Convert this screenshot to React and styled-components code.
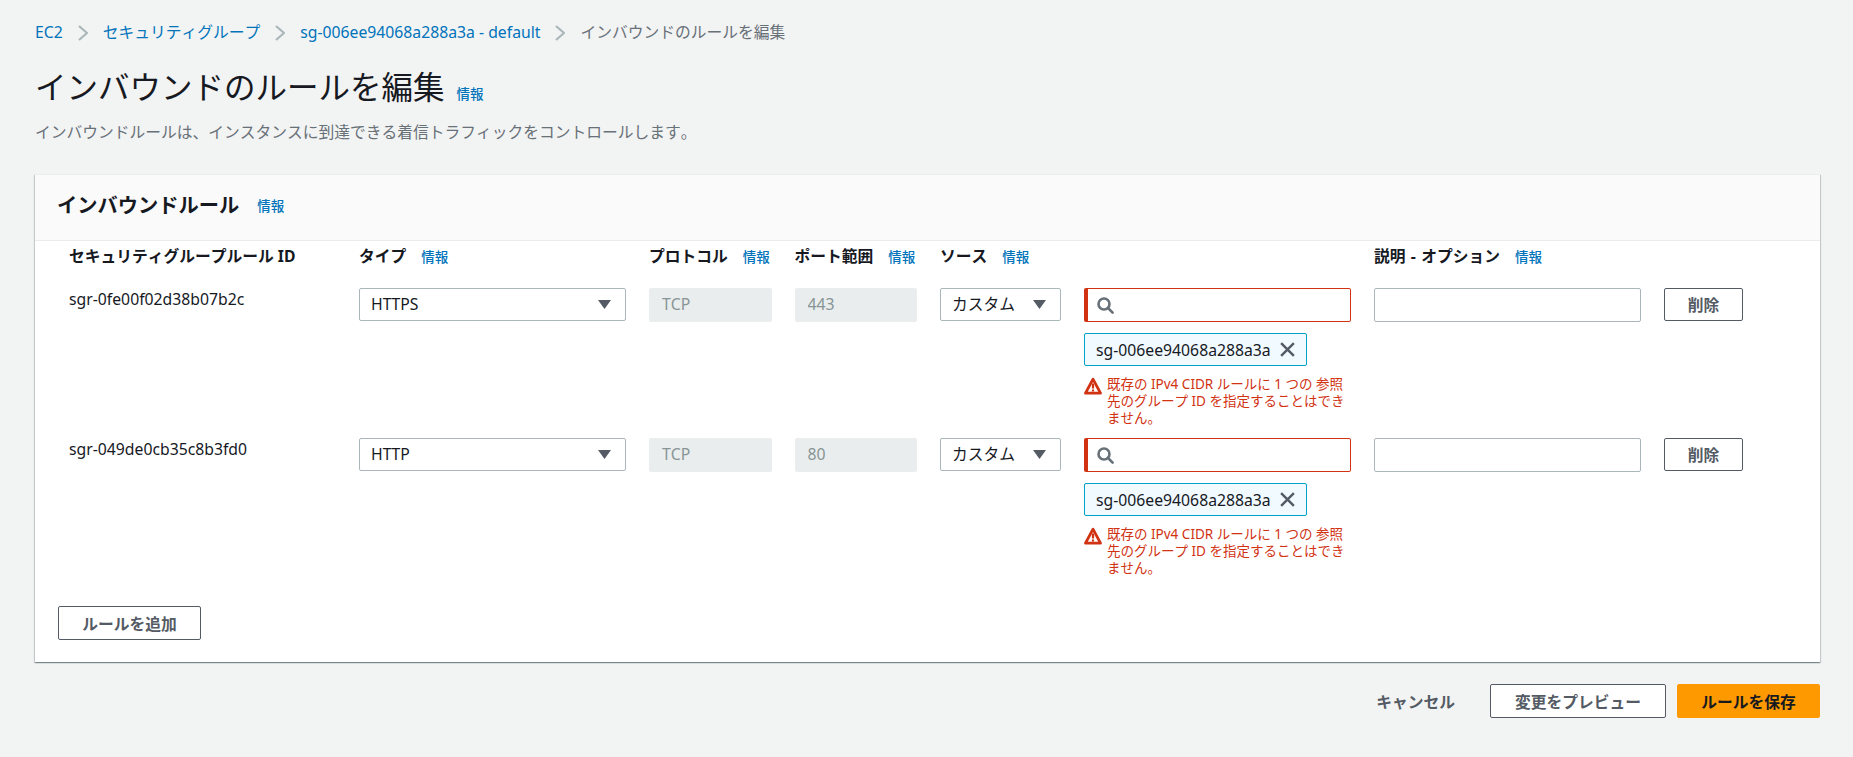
import React from 'react'
import styled, {createGlobalStyle} from 'styled-components'

const FONT = `"Noto Sans", "Noto Sans CJK JP", sans-serif`

const GlobalStyle = createGlobalStyle`
    html, body {
        margin: 0;
        padding: 0;
        background: #f2f3f3;
    }
    body {
        font-family: ${FONT};
        font-size: 15.75px;
        font-kerning: none;
        text-spacing-trim: space-all;
        color: #16191f;
    }
`

const RULES = [
    {id: 'sgr-0fe00f02d38b07b2c', type: 'HTTPS', port: '443'},
    {id: 'sgr-049de0cb35c8b3fd0', type: 'HTTP', port: '80'},
]

const Chevron = () => (
    <ChevronIcon viewBox='0 0 10 16' fill='none' stroke='#aab7b8' strokeWidth='2.2'>
        <path d='M1 1l8 7-8 7'/>
    </ChevronIcon>
)

const SearchIcon = () => (
    <svg width='17' height='17' viewBox='0 0 17 17' fill='none' stroke='#687078' strokeWidth='2.6'>
        <circle cx='7' cy='7' r='5.5'/>
        <path d='M11 11l4.6 4.6' strokeLinecap='round'/>
    </svg>
)

const CloseIcon = () => (
    <CloseButton viewBox='0 0 16 16' fill='none' stroke='#545b64' strokeWidth='2.6'>
        <path d='M1.2 1.2l13.6 13.6M14.8 1.2L1.2 14.8'/>
    </CloseButton>
)

const WarningIcon = () => (
    <WarningSvg viewBox='0 0 18 18'>
        <path d='M9 2.2L1.5 16.2h15z' fill='none' stroke='#d13212' strokeWidth='2.8' strokeLinejoin='round'/>
        <path d='M9 6.5v5M9 12.6v2' stroke='#d13212' strokeWidth='2.2'/>
    </WarningSvg>
)

const Select = ({value}) => (
    <SelectBox>
        <span>{value}</span>
        <svg width='13' height='9' viewBox='0 0 13 9'>
            <path d='M0 0h13L6.5 9z' fill='#545b64'/>
        </svg>
    </SelectBox>
)

const Heading = ({children, span, spaced}) => (
    <HeadingCell $span={span} $spaced={spaced}>
        {children}
        <Info>情報</Info>
    </HeadingCell>
)

const Rule = ({rule}) => (
    <>
        <RuleId>{rule.id}</RuleId>
        <Select value={rule.type}/>
        <DisabledInput disabled value='TCP' readOnly/>
        <DisabledInput disabled value={rule.port} readOnly/>
        <Select value='カスタム'/>
        <SourceColumn>
            <SearchBox>
                <SearchIcon/>
                <SearchInput/>
            </SearchBox>
            <Token>
                <span>sg-006ee94068a288a3a</span>
                <CloseIcon/>
            </Token>
            <ErrorMessage>
                <WarningIcon/>
                <ErrorText>既存の IPv4 CIDR ルールに 1 つの 参照先のグループ ID を指定することはできません。</ErrorText>
            </ErrorMessage>
        </SourceColumn>
        <TextInput/>
        <OutlineButton $small>削除</OutlineButton>
    </>
)

const App = () => {
    return (
        <Page>
            <GlobalStyle/>
            <Breadcrumbs>
                <Crumb>EC2</Crumb>
                <Chevron/>
                <Crumb>セキュリティグループ</Crumb>
                <Chevron/>
                <Crumb>sg-006ee94068a288a3a - default</Crumb>
                <Chevron/>
                <CurrentCrumb>インバウンドのルールを編集</CurrentCrumb>
            </Breadcrumbs>
            <TitleRow>
                <Title>インバウンドのルールを編集</Title>
                <Info>情報</Info>
            </TitleRow>
            <Description>インバウンドルールは、インスタンスに到達できる着信トラフィックをコントロールします。</Description>

            <Card>
                <CardHeader>
                    <CardTitle>インバウンドルール</CardTitle>
                    <Info>情報</Info>
                </CardHeader>
                <CardBody>
                    <RulesGrid>
                        <HeadingCell>セキュリティグループルール ID</HeadingCell>
                        <Heading>タイプ</Heading>
                        <Heading>プロトコル</Heading>
                        <Heading>ポート範囲</Heading>
                        <Heading span={2}>ソース</Heading>
                        <Heading spaced>説明 - オプション</Heading>
                        <span/>
                        {RULES.map(rule => <Rule key={rule.id} rule={rule}/>)}
                    </RulesGrid>
                    <AddButton>ルールを追加</AddButton>
                </CardBody>
            </Card>

            <Footer>
                <CancelLink>キャンセル</CancelLink>
                <OutlineButton>変更をプレビュー</OutlineButton>
                <PrimaryButton>ルールを保存</PrimaryButton>
            </Footer>
        </Page>
    )
}

export default App


const Page = styled.div`
    padding: 22px 33px 39px 35px;
    min-height: 757px;
    box-sizing: border-box;
`

const Breadcrumbs = styled.nav`
    display: flex;
    align-items: center;
    height: 21px;
    line-height: 21px;
    gap: 15px;
`

const Crumb = styled.a`
    color: #0073bb;
`

const CurrentCrumb = styled.span`
    color: #687078;
`

const ChevronIcon = styled.svg`
    width: 10px;
    height: 16px;
`

const TitleRow = styled.div`
    display: flex;
    align-items: baseline;
    margin-top: 24px;
    height: 40px;
`

const Title = styled.h1`
    margin: 0;
    font-size: 31.5px;
    font-weight: 400;
    line-height: 40px;
`

const Info = styled.a`
    margin-left: 12px;
    font-size: 13.5px;
    font-weight: 500;
    color: #0073bb;
`

const Description = styled.p`
    margin: 14px 0 0;
    line-height: 23px;
    color: #687078;
`

const Card = styled.section`
    margin-top: 30px;
    background: #fff;
    box-shadow: 0 1px 1px 0 rgba(0, 28, 36, .3), 1px 1px 1px 0 rgba(0, 28, 36, .15), -1px 1px 1px 0 rgba(0, 28, 36, .15);
    border-top: 1px solid #eaeded;
`

const CardHeader = styled.header`
    display: flex;
    align-items: center;
    height: 60px;
    padding: 0 22px 5px;
    background: #fafafa;
    border-bottom: 1px solid #eaeded;
    ${Info} {
        margin-left: 18px;
    }
`

const CardTitle = styled.h2`
    margin: 0;
    font-size: 20.25px;
    font-weight: 700;
    line-height: 26px;
`

const CardBody = styled.div`
    padding: 4px 23px 22px;
`

const RulesGrid = styled.div`
    display: grid;
    grid-template-columns: 267px 267px 122.5px 122.5px 121px 267px 267px 79px;
    column-gap: 23px;
    row-gap: 8px;
    align-items: start;
    padding-left: 11px;
`

const HeadingCell = styled.div`
    display: flex;
    align-items: baseline;
    white-space: nowrap;
    line-height: 23px;
    margin-bottom: 11px;
    font-weight: 700;
    word-spacing: ${props => props.$spaced ? '1.2px' : '0'};
    grid-column: ${props => props.$span ? `span ${props.$span}` : 'auto'};
    ${Info} {
        margin-left: 15px;
    }
`

const RuleId = styled.div`
    line-height: 22px;
`

const SelectBox = styled.div`
    display: flex;
    align-items: center;
    justify-content: space-between;
    height: 33px;
    box-sizing: border-box;
    padding: 0 14px 2px 11px;
    background: #fff;
    border: 1px solid #aab7b8;
    border-radius: 2px;

    svg {
        margin-top: 2px;
    }
`

const DisabledInput = styled.input`
    width: 100%;
    height: 34px;
    box-sizing: border-box;
    padding: 0 12px 2px;
    font: inherit;
    color: #879596;
    background: #eaeded;
    border: 1px solid #eaeded;
    border-radius: 2px;
`

const TextInput = styled.input`
    width: 100%;
    height: 34px;
    box-sizing: border-box;
    padding: 0 12px;
    font: inherit;
    background: #fff;
    border: 1px solid #aab7b8;
    border-radius: 2px;
`

const SourceColumn = styled.div`
    display: flex;
    flex-direction: column;
    align-items: flex-start;
`

const SearchBox = styled.div`
    display: flex;
    align-items: center;
    gap: 8px;
    width: 100%;
    height: 34px;
    box-sizing: border-box;
    padding-left: 9px;
    background: #fff;
    border: 1px solid #d13212;
    border-left-width: 4px;
    border-radius: 2px;
`

const SearchInput = styled.input`
    flex: 1;
    min-width: 0;
    border: 0;
    outline: 0;
    font: inherit;
    background: transparent;
`

const Token = styled.div`
    display: flex;
    align-items: center;
    gap: 9px;
    height: 33px;
    box-sizing: border-box;
    margin-top: 11px;
    padding: 0 9px 0 11px;
    width: 223px;
    white-space: nowrap;
    background: #f1faff;
    border: 1px solid #00a1c9;
    border-radius: 2px;
`

const CloseButton = styled.svg`
    flex: none;
    width: 15px;
    height: 15px;
`

const ErrorMessage = styled.div`
    display: flex;
    gap: 5px;
    margin-top: 10px;
    padding-bottom: 3px;
    color: #d13212;
`

const WarningSvg = styled.svg`
    flex: none;
    width: 18px;
    height: 18px;
    margin-top: 1px;
`

const ErrorText = styled.div`
    font-size: 13.5px;
    line-height: 17px;
`

const OutlineButton = styled.button`
    height: ${props => props.$small ? '33px' : '34px'};
    box-sizing: border-box;
    padding: 0 24px;
    font: inherit;
    font-weight: 700;
    color: #545b64;
    white-space: nowrap;
    background: #fff;
    border: 1px solid #545b64;
    border-radius: 2px;
    ${props => props.$small && 'padding: 0; width: 79px;'}
`

const AddButton = styled(OutlineButton)`
    display: block;
    margin-top: 26px;
    width: 143px;
    padding: 0;
`

const Footer = styled.footer`
    display: flex;
    align-items: center;
    justify-content: flex-end;
    margin-top: 22px;
`

const CancelLink = styled.a`
    margin-right: 35px;
    font-weight: 700;
    color: #545b64;
`

const PrimaryButton = styled.button`
    width: 143px;
    height: 34px;
    margin-left: 11px;
    box-sizing: border-box;
    padding: 0;
    font: inherit;
    font-weight: 700;
    color: #16191f;
    background: #ff9900;
    border: 1px solid #ff9900;
    border-radius: 2px;
`
